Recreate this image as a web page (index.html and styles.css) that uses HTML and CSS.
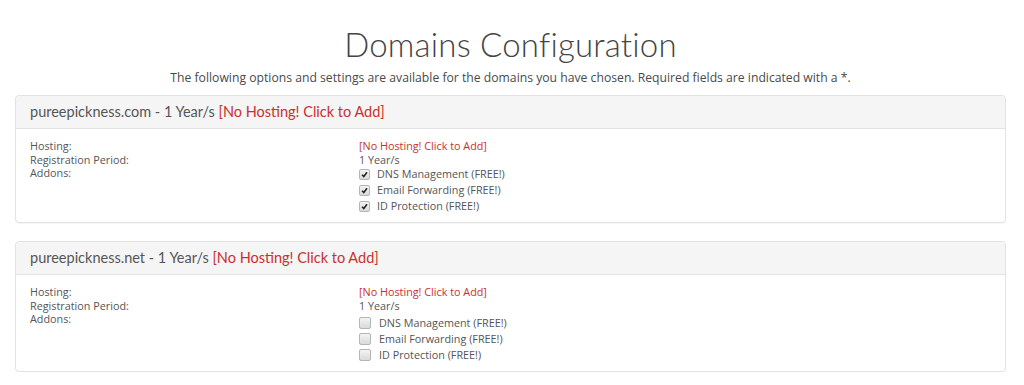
FILE: index.html
```html
<!DOCTYPE html>
<html>
<head>
<meta charset="utf-8">
<link rel="stylesheet" href="styles.css">
</head>
<body>
<div class="page">
  <h1 class="title">Domains Configuration</h1>
  <p class="intro">The following options and settings are available for the domains you have chosen. Required fields are indicated with a *.</p>

  <div class="card">
    <div class="card-head">pureepickness.com - <span class="os">1</span> Year/s <a class="red">[No Hosting! Click to Add]</a></div>
    <div class="card-body">
      <div class="labels">
        <div>Hosting:</div>
        <div>Registration Period:</div>
        <div>Addons:</div>
      </div>
      <div class="values">
        <div class="red">[No Hosting! Click to Add]</div>
        <div>1 Year/s</div>
        <ul class="addons">
          <li><span class="cb checked"><svg viewBox="0 0 10 10"><path d="M2.3 5.2 L4.2 7.3 L7.8 2.6" fill="none" stroke="#222" stroke-width="1.7"/></svg></span>DNS Management (FREE!)</li>
          <li><span class="cb checked"><svg viewBox="0 0 10 10"><path d="M2.3 5.2 L4.2 7.3 L7.8 2.6" fill="none" stroke="#222" stroke-width="1.7"/></svg></span>Email Forwarding (FREE!)</li>
          <li><span class="cb checked"><svg viewBox="0 0 10 10"><path d="M2.3 5.2 L4.2 7.3 L7.8 2.6" fill="none" stroke="#222" stroke-width="1.7"/></svg></span>ID Protection (FREE!)</li>
        </ul>
      </div>
    </div>
  </div>

  <div class="card">
    <div class="card-head">pureepickness.net - <span class="os">1</span> Year/s <a class="red">[No Hosting! Click to Add]</a></div>
    <div class="card-body">
      <div class="labels">
        <div>Hosting:</div>
        <div>Registration Period:</div>
        <div>Addons:</div>
      </div>
      <div class="values">
        <div class="red">[No Hosting! Click to Add]</div>
        <div>1 Year/s</div>
        <ul class="addons unchecked">
          <li><span class="cb"></span>DNS Management (FREE!)</li>
          <li><span class="cb"></span>Email Forwarding (FREE!)</li>
          <li><span class="cb"></span>ID Protection (FREE!)</li>
        </ul>
      </div>
    </div>
  </div>
</div>
</body>
</html>
```
FILE: styles.css
```css
html, body {
  margin: 0;
  padding: 0;
  background: #fff;
}
body {
  font-family: "Open Sans", "Liberation Sans", sans-serif;
  color: #555;
}
.page {
  padding: 22px 18px 0 15px;
}
.title {
  margin: 0;
  text-align: center;
  font-family: Lato, "Open Sans", sans-serif;
  font-weight: 300;
  font-size: 33px;
  line-height: 44px;
  color: #444;
  letter-spacing: 0.2px;
}
.intro {
  margin: 4px 0 0;
  text-align: center;
  font-size: 12.2px;
  line-height: 16px;
  color: #4a4a4a;
}
.card {
  margin-top: 9px;
  border: 1px solid #e2e2e2;
  border-radius: 4px;
  box-shadow: 0 1px 1px rgba(0,0,0,0.04);
}
.card + .card {
  margin-top: 18px;
}
.card-head {
  background: #f5f5f5;
  border-bottom: 1px solid #e2e2e2;
  padding: 0 14px;
  height: 32px;
  line-height: 32px;
  font-family: Lato, "Open Sans", sans-serif;
  font-size: 14.5px;
  color: #555;
  border-radius: 4px 4px 0 0;
}
.card-head .red {
  color: #c9302c;
}
.red {
  color: #c0392b;
}
.card-body {
  display: grid;
  grid-template-columns: 329px 1fr;
  padding: 10px 14px 8px;
  font-size: 10.8px;
  line-height: 13.5px;
  color: #555;
}
.values .red {
  color: #c9302c;
}
.addons {
  list-style: none;
  margin: 0;
  padding: 0;
}
.addons.unchecked {
  margin-top: 3px;
}
.addons li {
  display: flex;
  align-items: center;
  height: 16px;
}
.cb {
  width: 9px;
  height: 9px;
  margin-right: 7px;
  border: 1px solid #b5b5b5;
  border-radius: 2px;
  background: linear-gradient(#f4f4f4, #dadada);
  display: flex;
  align-items: center;
  justify-content: center;
}
.unchecked .cb {
  width: 10px;
  height: 10px;
  margin-right: 8px;
}
.cb svg {
  width: 9px;
  height: 9px;
  display: block;
}
```
